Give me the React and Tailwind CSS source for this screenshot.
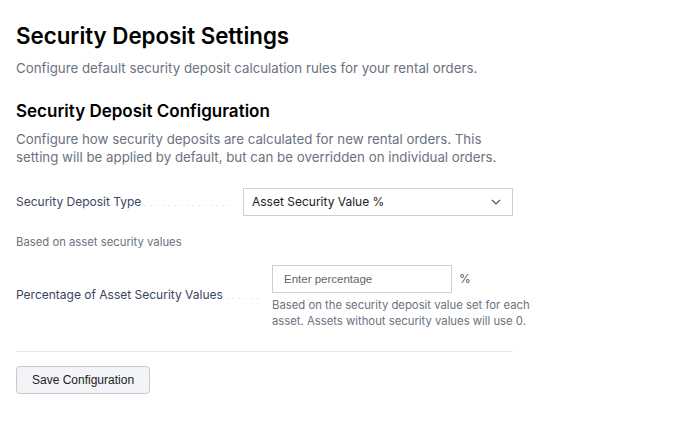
export default function App() {
  const font = { fontFamily: 'Inter, "Noto Sans", sans-serif' }
  const arial = { fontFamily: '"Liberation Sans", Arial, sans-serif' }
  const dots =
    'h-px flex-1 bg-[linear-gradient(to_right,#d4d4d4_1px,transparent_1px)] bg-[length:6px_1px] bg-repeat-x'
  return (
    <div className="min-h-screen bg-white px-4 pt-[22px] text-[#111827]" style={font}>
      <h1 className="text-[22.3px] font-semibold leading-[28px] text-black">Security Deposit Settings</h1>
      <p className="mt-[9px] text-[13.3px] leading-[18px] text-[#6b7280]">
        Configure default security deposit calculation rules for your rental orders.
      </p>

      <h2 className="mt-[22px] text-[17px] font-semibold leading-[24px] text-black">
        Security Deposit Configuration
      </h2>
      <p className="mt-[7px] w-[500px] text-[13.3px] leading-[18px] text-[#6b7280]">
        Configure how security deposits are calculated for new rental orders. This setting will be
        applied by default, but can be overridden on individual orders.
      </p>

      <div className="mt-[22px] flex items-center">
        <div className="flex w-[227px] items-end">
          <span className="text-[12px] leading-[16px] text-[#3b4563]">Security Deposit Type</span>
          <span className={`mb-[4px] ml-[4px] mr-[11px] ${dots}`} />
        </div>
        <div className="flex h-[28px] w-[270px] items-center justify-between border border-[#cfcfcf] bg-white pl-2 pr-[11px]">
          <span className="text-[12px] text-[#222]">Asset Security Value %</span>
          <svg width="10" height="6" viewBox="0 0 10 6" fill="none">
            <path d="M1 1l4 4 4-4" stroke="#555" strokeWidth="1.2" />
          </svg>
        </div>
      </div>

      <p className="mt-[19px] text-[11.3px] leading-[14px] text-[#6b7280]">Based on asset security values</p>

      <div className="mt-[16px] flex items-start">
        <div className="flex w-[256px] items-end pt-[22px]">
          <span className="text-[12px] leading-[16px] text-[#3b4563]">
            Percentage of Asset Security Values
          </span>
          <span className={`mb-[4px] ml-[4px] mr-[12px] ${dots}`} />
        </div>
        <div>
          <div className="flex items-center">
            <input
              placeholder="Enter percentage"
              className="h-[28px] w-[180px] border border-[#cfcfcf] px-[11px] text-[11.5px] placeholder:text-[#666] outline-none"
              style={arial}
            />
            <span className="ml-[7px] text-[12px] text-[#555]">%</span>
          </div>
          <p className="mt-[4px] w-[275px] text-[11.3px] leading-[16px] text-[#6b7280]">
            Based on the security deposit value set for each asset. Assets without security values
            will use 0.
          </p>
        </div>
      </div>

      <div className="mt-[22px] h-px w-[497px] bg-[#e5e7eb]" />

      <button
        className="mt-[14px] h-[28px] rounded border border-[#c8c8c8] bg-[#f3f4f8] px-[15px] text-[12px] text-[#222]"
        style={arial}
      >
        Save Configuration
      </button>
    </div>
  )
}
